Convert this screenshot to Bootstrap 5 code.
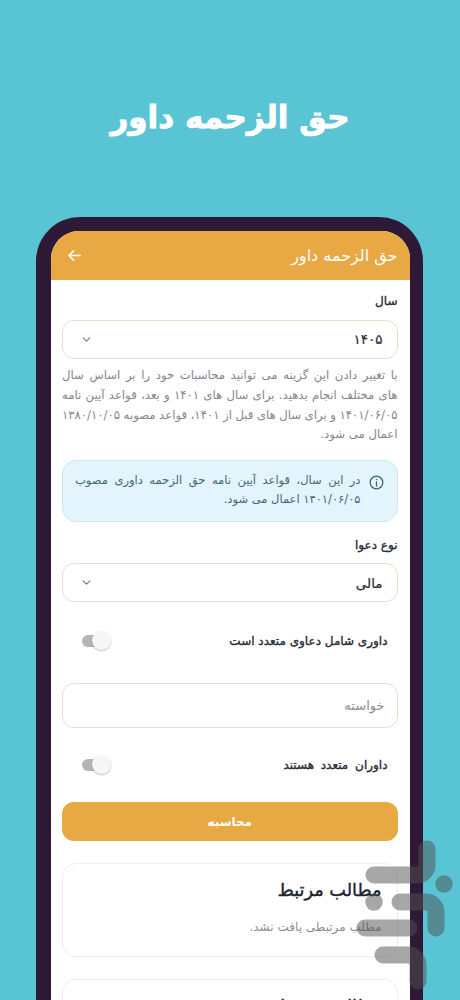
<!DOCTYPE html>
<html lang="fa" dir="rtl">
<head>
<meta charset="utf-8">
<title>حق الزحمه داور</title>
<link href="https://cdn.jsdelivr.net/npm/bootstrap@5.3.0/dist/css/bootstrap.min.css" rel="stylesheet">
<style>
html,body{height:1000px;overflow:hidden}
body{background:#58c4d4;font-family:"DejaVu Sans",sans-serif;position:relative;color:#2a2a35}
.hero-title{color:#fff;font-size:31px;font-weight:700;line-height:40px;padding-top:97px;height:217px;margin:0;text-align:center;-webkit-text-stroke:.9px #fff}
.phone-shell{margin:0 37px 0 36px;background:#2e1a37;border-radius:44px 44px 0 0;padding:14px 13.5px 0 14.5px;height:783px}
.phone-screen{background:#fff;border-radius:28px 28px 0 0;height:769px;overflow:hidden}
.app-head{background:#e8a843;height:49px;padding:0 12px 0 16px;color:#fff;font-size:16px}
.app-body{padding:11px 12px 0 11.5px}
.fld-label{font-size:12px;font-weight:400;-webkit-text-stroke:.35px #2a2a35;line-height:20px;margin:0 0 9px;color:#2a2a35}
.fld-label.lbl-tight{margin-bottom:8px}
.fld-select{height:39px;border:1px solid #e8dfcc;border-radius:12px;padding:0 14px 0 19px;font-size:13.5px;color:#2a2a35;-webkit-text-stroke:.2px #2a2a35}
.help-text{font-size:11.7px;line-height:19.8px;color:#85858f;margin:7px 0 15px}
.help-line{display:block;white-space:nowrap;text-align:justify;text-align-last:justify}
.help-line.line-tight{word-spacing:-2px}
.help-line.line-end{text-align-last:right}
.note-box{background:#e3f4fc;border:1px solid #cbe8f6;border-radius:14px;padding:10px 13px 10px 12px;height:62px;color:#44687a;font-size:11.5px;line-height:19px;margin-bottom:13px;gap:8px}
.note-box p{margin:0;text-align:justify;flex:1}
.toggle-row{height:81px;padding:0 10px 3px 20px;font-size:12px;font-weight:400;-webkit-text-stroke:.35px #2a2a35;color:#2a2a35}
.toggle-row.row-short{height:73px;padding-bottom:0;word-spacing:3px}
.toggle-track{width:22px;height:12px;border-radius:6px;background:#b5b5b5;position:relative;-webkit-text-stroke:0}
.toggle-knob{position:absolute;left:10px;top:-4px;width:19px;height:19px;border-radius:50%;background:#f6f6f6;box-shadow:0 1px 2px rgba(0,0,0,.25)}
.fld-input{height:45px;border:1px solid #e8dfcc;border-radius:12px;padding:0 12px;font-size:13px;color:#8d8d96}
.calc-btn{height:39px;background:#e8a843;border:0;border-radius:12px;color:#fff;font-size:12px;font-weight:700;width:100%;margin-top:1px;display:block}
.calc-btn:hover{background:#e8a843;color:#fff}
.rel-card{border:1px solid #eeeeee;border-radius:14px;padding:13px 15px;height:94px;margin-top:22px}
.rel-card h2{font-size:17.7px;font-weight:400;-webkit-text-stroke:.4px #222230;line-height:26px;margin:0 0 14px;color:#222230}
.rel-card p{font-size:12px;line-height:20px;margin:0;color:#8d8d96}
.wmark{position:absolute;left:0;top:0;pointer-events:none}
</style>
</head>
<body>
<h1 class="hero-title">حق الزحمه داور</h1>
<div class="phone-shell">
  <div class="phone-screen">
    <div class="app-head d-flex align-items-center justify-content-between">
      <span>حق الزحمه داور</span>
      <svg width="14" height="13" viewBox="0 0 15 14" fill="none" stroke="#fff" stroke-width="1.7" stroke-linecap="round" stroke-linejoin="round" aria-hidden="true"><path d="M14 7H2M7 2 2 7l5 5"/></svg>
    </div>
    <div class="app-body">
      <div class="fld-label">سال</div>
      <div class="fld-select d-flex align-items-center justify-content-between">
        <span>۱۴۰۵</span>
        <svg width="9" height="5" viewBox="0 0 10 6" fill="none" stroke="#777" stroke-width="1.3" stroke-linecap="round" stroke-linejoin="round" aria-hidden="true"><path d="m1 1 4 4 4-4"/></svg>
      </div>
      <p class="help-text"><span class="help-line">با تغییر دادن این گزینه می توانید محاسبات خود را بر اساس سال</span> <span class="help-line">های مختلف انجام بدهید. برای سال های ۱۴۰۱ و بعد، قواعد آیین نامه</span> <span class="help-line line-tight">۱۴۰۱/۰۶/۰۵ و برای سال های قبل از ۱۴۰۱، قواعد مصوبه ۱۳۸۰/۱۰/۰۵</span> <span class="help-line line-end">اعمال می شود.</span></p>
      <div class="note-box d-flex align-items-start">
        <svg class="flex-shrink-0 mt-1" width="15" height="15" viewBox="0 0 15 15" fill="none" stroke="#3d6478" stroke-width="1.3" stroke-linecap="round" aria-hidden="true"><circle cx="7.5" cy="7.5" r="6.3"/><path d="M7.5 7v4M7.5 4.3v.2"/></svg>
        <p>در این سال، قواعد آیین نامه حق الزحمه داوری مصوب ۱۴۰۱/۰۶/۰۵ اعمال می شود.</p>
      </div>
      <div class="fld-label lbl-tight">نوع دعوا</div>
      <div class="fld-select d-flex align-items-center justify-content-between">
        <span>مالی</span>
        <svg width="9" height="5" viewBox="0 0 10 6" fill="none" stroke="#777" stroke-width="1.3" stroke-linecap="round" stroke-linejoin="round" aria-hidden="true"><path d="m1 1 4 4 4-4"/></svg>
      </div>
      <div class="toggle-row d-flex align-items-center justify-content-between">
        <span>داوری شامل دعاوی متعدد است</span>
        <span class="toggle-track"><span class="toggle-knob"></span></span>
      </div>
      <div class="fld-input d-flex align-items-center">خواسته</div>
      <div class="toggle-row row-short d-flex align-items-center justify-content-between">
        <span>داوران متعدد هستند</span>
        <span class="toggle-track"><span class="toggle-knob"></span></span>
      </div>
      <button type="button" class="btn calc-btn">محاسبه</button>
      <div class="rel-card">
        <h2>مطالب مرتبط</h2>
        <p>مطلب مرتبطی یافت نشد.</p>
      </div>
      <div class="rel-card">
        <h2>مطالب مرتبط</h2>
      </div>
    </div>
  </div>
</div>
<svg class="wmark" width="460" height="1000" viewBox="0 0 460 1000" fill="none" stroke="#505050" stroke-opacity=".5" stroke-width="17" stroke-linecap="round" aria-hidden="true">
  <path d="M427 849v16a10 10 0 0 1-10 10h-43"/>
  <path d="M400 902h26a10 10 0 0 1 10 10v16"/>
  <path d="M365 928h44"/>
  <path d="M383 955h25a10 10 0 0 1 10 10v16"/>
  <circle cx="444" cy="884" r="8.7" fill="#505050" fill-opacity=".5" stroke="none"/>
  <circle cx="374" cy="902" r="8.7" fill="#505050" fill-opacity=".5" stroke="none"/>
</svg>
<script src="https://cdn.jsdelivr.net/npm/bootstrap@5.3.0/dist/js/bootstrap.bundle.min.js"></script>
</body>
</html>
